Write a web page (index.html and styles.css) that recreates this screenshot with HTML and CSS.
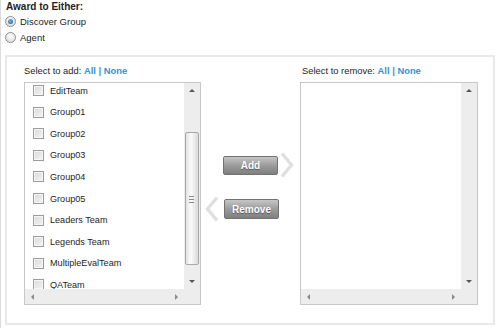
FILE: index.html
```html
<!DOCTYPE html>
<html lang="en">
<head>
    <meta charset="UTF-8">
    <title>Award to Either</title>
    <link rel="stylesheet" href="styles.css">
</head>
<body>
    <div class="page">
        <!-- Tipo de premio -->
        <div class="award">
            <div class="award-title">Award to Either:</div>
            <label class="radio-row"><span class="radio checked"></span>Discover Group</label>
            <label class="radio-row"><span class="radio"></span>Agent</label>
        </div>

        <!-- Selecao de grupos -->
        <div class="panel">
            <div class="col">
                <div class="col-label">Select to add: <a class="lnk">All</a> <span class="lnk">|</span> <a class="lnk">None</a></div>
                <div class="listbox">
                    <div class="list-view">
                        <ul class="items">
                            <li><span class="check"></span>EditTeam</li>
                            <li><span class="check"></span>Group01</li>
                            <li><span class="check"></span>Group02</li>
                            <li><span class="check"></span>Group03</li>
                            <li><span class="check"></span>Group04</li>
                            <li><span class="check"></span>Group05</li>
                            <li><span class="check"></span>Leaders Team</li>
                            <li><span class="check"></span>Legends Team</li>
                            <li><span class="check"></span>MultipleEvalTeam</li>
                            <li><span class="check"></span>QATeam</li>
                        </ul>
                    </div>
                    <div class="vscroll">
                        <span class="arr arr-up"></span>
                        <div class="thumb-area">
                            <div class="thumb"><span class="grip"></span></div>
                        </div>
                        <span class="arr arr-down"></span>
                    </div>
                    <div class="hscroll">
                        <span class="arr arr-left"></span>
                        <span class="arr arr-right"></span>
                    </div>
                    <div class="corner"></div>
                </div>
            </div>

            <div class="mid">
                <div class="move-row add-row">
                    <button class="move-btn">Add</button>
                    <svg class="chev" width="14" height="26" viewBox="0 0 14 26"><polyline points="2,1.5 11.5,13 2,24.5" /></svg>
                </div>
                <div class="move-row remove-row">
                    <svg class="chev" width="14" height="26" viewBox="0 0 14 26"><polyline points="12,1.5 2.5,13 12,24.5" /></svg>
                    <button class="move-btn">Remove</button>
                </div>
            </div>

            <div class="col col-right">
                <div class="col-label">Select to remove: <a class="lnk">All</a> <span class="lnk">|</span> <a class="lnk">None</a></div>
                <div class="listbox">
                    <div class="list-view"></div>
                    <div class="vscroll">
                        <span class="arr arr-up"></span>
                        <div class="thumb-area"></div>
                        <span class="arr arr-down"></span>
                    </div>
                    <div class="hscroll">
                        <span class="arr arr-left"></span>
                        <span class="arr arr-right"></span>
                    </div>
                    <div class="corner"></div>
                </div>
            </div>
        </div>
    </div>
</body>
</html>
```

FILE: styles.css
```css
html, body {
    margin: 0;
    padding: 0;
    background-color: #ffffff;
}

body {
    font-family: "Liberation Sans", Arial, sans-serif;
    color: #1e1e1e;
    width: 500px;
    height: 328px;
    overflow: hidden;
}

.page {
    border-left: 1px solid #dcdcdc;
    padding-left: 4px;
    height: 328px;
    box-sizing: border-box;
}

.award {
    padding-top: 1px;
    margin-bottom: 10px;
}

.award-title {
    font-size: 10px;
    font-weight: bold;
    line-height: 12px;
    padding-left: 1px;
}

.radio-row {
    display: flex;
    align-items: center;
    height: 16px;
    font-size: 9.5px;
    gap: 4px;
}

.radio {
    width: 11px;
    height: 11px;
    box-sizing: border-box;
    border-radius: 50%;
    border: 1px solid #8f8f8f;
    background: radial-gradient(circle at 50% 35%, #ffffff 0%, #dcdcdc 80%);
    position: relative;
}

.radio.checked::after {
    content: "";
    position: absolute;
    left: 2px;
    top: 2px;
    width: 5px;
    height: 5px;
    border-radius: 50%;
    background: radial-gradient(circle at 40% 35%, #6fb8f0 0%, #1f5f9e 90%);
}

.panel {
    width: 490px;
    height: 270px;
    box-sizing: border-box;
    border: 2px solid #e9e9e9;
    padding: 8px 15px 18px 17px;
    display: flex;
}

.col {
    width: 177px;
    display: flex;
    flex-direction: column;
}

.col-right {
    width: 178px;
}

.col-label {
    font-size: 9.4px;
    line-height: 12px;
    height: 12px;
    margin-bottom: 5px;
    white-space: nowrap;
}

.col-right .col-label {
    padding-left: 2px;
}

.lnk {
    color: #3b8fd3;
    font-weight: bold;
}

.listbox {
    height: 223px;
    box-sizing: border-box;
    border: 1px solid #c8c8c8;
    display: grid;
    grid-template-columns: 1fr 16px;
    grid-template-rows: 1fr 15px;
    overflow: hidden;
}

.list-view {
    overflow: hidden;
    background-color: #ffffff;
}

.items {
    list-style: none;
    margin: -3px 0 0 0;
    padding: 0 0 0 8px;
}

.items li {
    height: 21.55px;
    display: flex;
    align-items: center;
    gap: 6px;
    font-size: 9.1px;
    white-space: nowrap;
}

.check {
    width: 11px;
    height: 11px;
    box-sizing: border-box;
    border: 1px solid #9c9c9c;
    background: linear-gradient(135deg, #d8d8d8 0%, #f4f4f4 100%);
    box-shadow: inset 0 0 0 1px #f6f6f6;
    flex-shrink: 0;
}

.vscroll {
    background-color: #ededed;
    display: flex;
    flex-direction: column;
    align-items: center;
}

.thumb-area {
    flex: 1;
    width: 100%;
    position: relative;
}

.thumb {
    position: absolute;
    left: 1px;
    right: 1px;
    top: 40px;
    height: 133px;
    box-sizing: border-box;
    border: 1px solid #a8a8a8;
    border-radius: 2px;
    background: linear-gradient(90deg, #e2e2e2 0%, #fbfbfb 40%, #dadada 100%);
}

.grip {
    position: absolute;
    left: 3px;
    top: 63px;
    width: 5px;
    height: 5px;
    border-top: 1px solid #888;
    border-bottom: 1px solid #888;
}

.grip::after {
    content: "";
    position: absolute;
    left: 0;
    right: 0;
    top: 2px;
    border-top: 1px solid #888;
}

.hscroll {
    background-color: #ededed;
    display: flex;
    align-items: center;
    justify-content: space-between;
    padding: 0 6px;
}

.corner {
    background-color: #ededed;
}

.arr {
    width: 0;
    height: 0;
    border-style: solid;
    border-color: transparent;
}

.arr-up {
    margin-top: 6px;
    border-width: 0 3px 3px 3px;
    border-bottom-color: #555555;
}

.arr-down {
    margin-bottom: 6px;
    border-width: 3px 3px 0 3px;
    border-top-color: #555555;
}

.arr-left {
    border-width: 3px 3px 3px 0;
    border-right-color: #8a8a8a;
}

.arr-right {
    border-width: 3px 0 3px 3px;
    border-left-color: #8a8a8a;
}

.mid {
    width: 99px;
    padding-top: 87px;
    display: flex;
    flex-direction: column;
    gap: 18px;
}

.move-row {
    display: flex;
    align-items: center;
    height: 26px;
}

.add-row {
    padding-left: 22px;
    gap: 2px;
}

.remove-row {
    padding-left: 4px;
    gap: 5px;
}

.move-btn {
    width: 55px;
    height: 19px;
    margin: 0;
    padding: 0;
    border: 1px solid #727272;
    border-radius: 2px;
    background: linear-gradient(#c6c6c6 0%, #9c9c9c 50%, #7f7f7f 100%);
    color: #ffffff;
    font-family: "Liberation Sans", Arial, sans-serif;
    font-size: 10px;
    font-weight: bold;
    text-shadow: 0 1px 1px #555555;
    cursor: pointer;
}

.remove-row .move-btn {
    height: 20px;
}

.chev polyline {
    fill: none;
    stroke: #e0e0e0;
    stroke-width: 3.5;
}
```
